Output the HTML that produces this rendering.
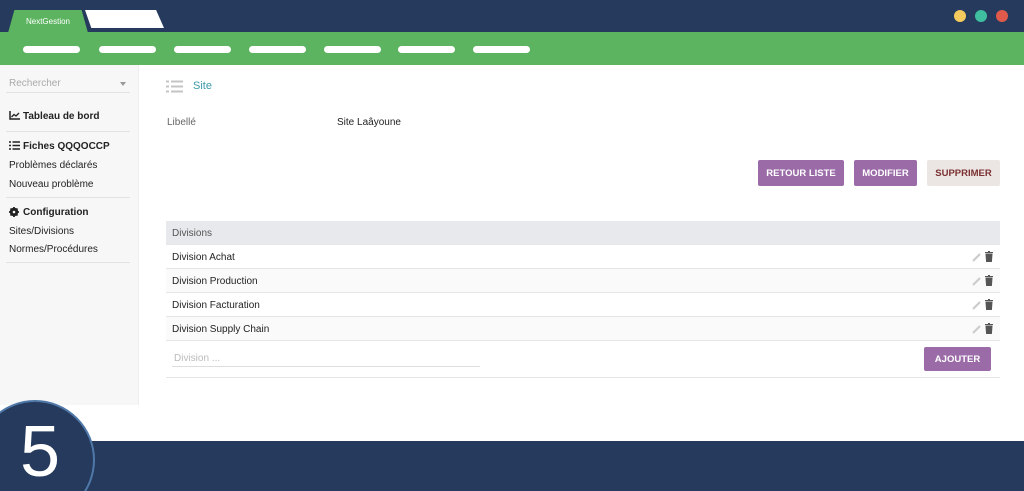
<!DOCTYPE html><html><head><style>
*{margin:0;padding:0;box-sizing:border-box}
html,body{width:1024px;height:491px;overflow:hidden}
body{background:#fff;font-family:"Liberation Sans",sans-serif;font-size:10px;color:#222}
#w{position:relative;width:1024px;height:491px;overflow:hidden}
.top{position:absolute;left:0;top:0;width:1024px;height:32px;background:#253a5c}
.green{position:absolute;left:0;top:32px;width:1024px;height:33px;background:#5cb460}
.tab1{position:absolute;left:8px;top:10px;width:80px;height:23px;background:#5cb460;clip-path:polygon(8% 0,92% 0,100% 100%,0 100%);color:#fff;font-size:8px;text-align:center;line-height:24px}
.tab2{position:absolute;left:85px;top:10px;width:79px;height:18px;background:#fff;clip-path:polygon(0 0,90% 0,100% 100%,8% 100%)}
.pill{position:absolute;top:46px;width:57px;height:7px;background:#fff;border-radius:4px}
.dot{position:absolute;top:10px;width:12px;height:12px;border-radius:50%}
.side{position:absolute;left:0;top:65px;width:139px;height:340px;background:#f7f7f7;border-right:1px solid #eee}
.side .t{position:absolute;left:9px;font-size:10px}
.b{font-weight:bold}
.hr{position:absolute;left:6px;width:124px;height:1px;background:#e2e2e2}
.btn{position:absolute;top:160px;height:26px;background:#9b6ba8;color:#fff;font-weight:bold;font-size:9.5px;display:flex;align-items:center;justify-content:center;border-radius:2px}
.row{position:absolute;left:166px;width:834px;height:24px;border-bottom:1px solid #e6e6e6;display:flex;align-items:center;padding-left:6px;padding-top:2px;font-size:10px}
.ic{position:absolute;right:5px;top:6px;width:24px;height:11px}
.bot{position:absolute;left:0;top:441px;width:1024px;height:50px;background:#253a5c}
.five{position:absolute;left:20px;top:416px;color:#fff;font-size:72px;line-height:72px}
</style></head><body><div id="w">
<div class="top"></div><div class="green"></div>
<div class="tab1">NextGestion</div><div class="tab2"></div>
<div class="pill" style="left:23px"></div><div class="pill" style="left:99px"></div><div class="pill" style="left:174px"></div><div class="pill" style="left:249px"></div><div class="pill" style="left:324px"></div><div class="pill" style="left:398px"></div><div class="pill" style="left:473px"></div>
<div class="dot" style="left:954px;background:#f4c95d"></div><div class="dot" style="left:975px;background:#3fbf9f"></div><div class="dot" style="left:996px;background:#e05a4b"></div>
<div class="side">
<div class="t" style="top:13px;color:#aaa">Rechercher</div><div style="position:absolute;left:120px;top:17px;border:3px solid transparent;border-top:4px solid #999"></div>
<div class="hr" style="top:27px"></div>
<svg style="position:absolute;left:9px;top:46px" width="11" height="9" viewBox="0 0 11 9"><path d="M1 0V8H11" stroke="#222" stroke-width="1.5" fill="none"/><path d="M2.5 6L5 3.5 7 5 10 2" stroke="#222" stroke-width="1.3" fill="none"/></svg>
<div class="t b" style="top:46px;left:23px">Tableau de bord</div>
<div class="hr" style="top:66px"></div>
<svg style="position:absolute;left:9px;top:76px" width="11" height="9" viewBox="0 0 11 9"><path d="M0 1h2M0 4.5h2M0 8h2M3.5 1H11M3.5 4.5H11M3.5 8H11" stroke="#222" stroke-width="1.4"/></svg>
<div class="t b" style="top:76px;left:23px">Fiches QQQOCCP</div>
<div class="t" style="top:95px">Problèmes déclarés</div>
<div class="t" style="top:114px">Nouveau problème</div>
<div class="hr" style="top:132px"></div>
<svg style="position:absolute;left:9px;top:142px" width="10" height="10" viewBox="0 0 10 10"><circle cx="5" cy="5" r="3.2" fill="none" stroke="#222" stroke-width="2"/><path d="M5 0V10M0 5H10M1.5 1.5L8.5 8.5M8.5 1.5L1.5 8.5" stroke="#222" stroke-width="1.8"/><circle cx="5" cy="5" r="1.3" fill="#f7f7f7"/></svg>
<div class="t b" style="top:142px;left:23px">Configuration</div>
<div class="t" style="top:161px">Sites/Divisions</div>
<div class="t" style="top:179px">Normes/Procédures</div>
<div class="hr" style="top:197px"></div>
</div>
<svg style="position:absolute;left:166px;top:80px" width="17" height="13" viewBox="0 0 17 13"><path d="M0 1.5h3M0 6.5h3M0 11.5h3M5 1.5H17M5 6.5H17M5 11.5H17" stroke="#c4c4c4" stroke-width="2"/></svg>
<div style="position:absolute;left:193px;top:80px;color:#3a9aa8;font-size:11px">Site</div>
<div style="position:absolute;left:167px;top:117px;color:#666">Libellé</div>
<div style="position:absolute;left:337px;top:117px">Site Laâyoune</div>
<div class="btn" style="left:758px;width:86px">RETOUR LISTE</div>
<div class="btn" style="left:854px;width:63px">MODIFIER</div>
<div class="btn" style="left:927px;width:73px;background:#ebe6e4;color:#7a3030">SUPPRIMER</div>
<div class="row" style="top:221px;background:#e8e9ec;color:#555">Divisions</div>
<div class="row" style="top:245px">Division Achat<svg class="ic" viewBox="0 0 24 11"><path d="M2 10L9 3" stroke="#ccc" stroke-width="2.2"/><path d="M14 1.5h8M17 0.5h2M15 3h6l-0.6 8h-4.8z" stroke="#555" fill="#555" stroke-width="1"/></svg></div>
<div class="row" style="top:269px;background:#fafafa">Division Production<svg class="ic" viewBox="0 0 24 11"><path d="M2 10L9 3" stroke="#ccc" stroke-width="2.2"/><path d="M14 1.5h8M17 0.5h2M15 3h6l-0.6 8h-4.8z" stroke="#555" fill="#555" stroke-width="1"/></svg></div>
<div class="row" style="top:293px">Division Facturation<svg class="ic" viewBox="0 0 24 11"><path d="M2 10L9 3" stroke="#ccc" stroke-width="2.2"/><path d="M14 1.5h8M17 0.5h2M15 3h6l-0.6 8h-4.8z" stroke="#555" fill="#555" stroke-width="1"/></svg></div>
<div class="row" style="top:317px;background:#fafafa">Division Supply Chain<svg class="ic" viewBox="0 0 24 11"><path d="M2 10L9 3" stroke="#ccc" stroke-width="2.2"/><path d="M14 1.5h8M17 0.5h2M15 3h6l-0.6 8h-4.8z" stroke="#555" fill="#555" stroke-width="1"/></svg></div>
<div style="position:absolute;left:174px;top:353px;color:#bbb">Division ...</div>
<div style="position:absolute;left:172px;top:366px;width:308px;height:1px;background:#ddd"></div>
<div class="btn" style="left:924px;top:347px;width:67px;height:24px">AJOUTER</div>
<div style="position:absolute;left:166px;top:377px;width:834px;height:1px;background:#e6e6e6"></div>
<div class="bot"></div>
<svg style="position:absolute;left:0;top:400px" width="100" height="91" viewBox="0 0 100 91"><circle cx="35" cy="60" r="59" fill="#253a5c" stroke="#4f78a8" stroke-width="2"/></svg>
<div class="five">5</div>
</div></body></html>
